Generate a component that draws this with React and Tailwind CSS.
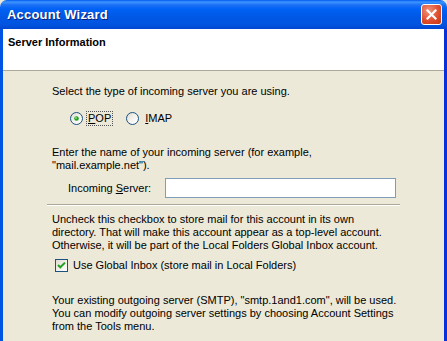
import React from "react";

function Radio({ checked }) {
  return (
    <svg width="13" height="13" viewBox="0 0 13 13" className="shrink-0">
      <defs>
        <linearGradient id={checked ? "rg1" : "rg2"} x1="0" y1="0" x2="1" y2="1">
          <stop offset="0" stopColor="#dcd9cf" />
          <stop offset="0.5" stopColor="#f4f3ee" />
          <stop offset="1" stopColor="#ffffff" />
        </linearGradient>
      </defs>
      <circle cx="6.5" cy="6.5" r="6" fill={`url(#${checked ? "rg1" : "rg2"})`} stroke="#1c5180" strokeWidth="1" />
      {checked && <circle cx="6.5" cy="6.5" r="2.3" fill="#21a121" />}
      {checked && <circle cx="6" cy="6" r="0.9" fill="#8ee08e" />}
    </svg>
  );
}

function Check() {
  return (
    <svg width="13" height="13" viewBox="0 0 13 13" className="shrink-0">
      <defs>
        <linearGradient id="cg" x1="0" y1="0" x2="1" y2="1">
          <stop offset="0" stopColor="#dcd9cf" />
          <stop offset="0.6" stopColor="#f4f3ee" />
          <stop offset="1" stopColor="#ffffff" />
        </linearGradient>
      </defs>
      <rect x="0.5" y="0.5" width="12" height="12" fill="url(#cg)" stroke="#1c5180" />
      <path d="M3 6 L5.3 8.3 L10 3.6" fill="none" stroke="#21a121" strokeWidth="2" />
    </svg>
  );
}

export default function App() {
  return (
    <div
      className="w-[447px] h-[341px] overflow-hidden flex flex-col bg-[#ece9d8] text-[11px] leading-[13px] text-black"
      style={{ fontFamily: '"Liberation Sans", Arial, sans-serif' }}
    >
      {/* Title bar */}
      <div className="h-[29px] shrink-0 flex items-center justify-between pl-[7px] pr-[5px] rounded-t-[7px] bg-[linear-gradient(to_bottom,#0058ee_0px,#3d95ff_2px,#1b70f5_5px,#0062f5_9px,#0058e6_16px,#0055e0_24px,#0047d1_29px)]">
        <span className="text-white font-bold text-[13px] [text-shadow:1px_1px_0_#0a1e78] tracking-[0.2px]">
          Account Wizard
        </span>
        <div className="w-[21px] h-[21px] rounded-[3px] border border-white bg-[radial-gradient(circle_at_35%_30%,#f0957c,#e04e2f_55%,#c13812)] flex items-center justify-center">
          <svg width="11" height="11" viewBox="0 0 11 11">
            <path d="M1.5 1.5 L9.5 9.5 M9.5 1.5 L1.5 9.5" stroke="white" strokeWidth="2.2" strokeLinecap="square" />
          </svg>
        </div>
      </div>
      {/* Body */}
      <div className="flex-1 flex border-l-[3px] border-r-[3px] border-l-[#0054e3] border-r-[#0831d9]">
        <div className="flex-1 flex flex-col">
          <div className="h-[42px] bg-white border-b border-[#aca899] pt-[7px] pl-[5px] font-bold">
            Server Information
          </div>
          <div className="flex-1 pl-[49px] pr-[41px] flex flex-col">
            <div className="mt-[14px]">Select the type of incoming server you are using.</div>
            <div className="mt-[14px] flex items-center h-[13px] pl-[18px]">
              <Radio checked />
              <span className="ml-[4px] px-[1px] outline outline-1 outline-dotted outline-[#555] leading-[13px]">
                <u>P</u>OP
              </span>
              <span className="ml-[14px]"></span>
              <Radio />
              <span className="ml-[6px]">
                <u>I</u>MAP
              </span>
            </div>
            <div className="mt-[21px]">
              Enter the name of your incoming server (for example,
              <br />
              "mail.example.net").
            </div>
            <div className="mt-[6px] flex items-center">
              <span className="w-[113px] pl-[16px]">
                Incoming <u>S</u>erver:
              </span>
              <input className="w-[231px] h-[20px] border border-[#7f9db9] bg-white outline-none" />
            </div>
            <div className="mt-[6px] -ml-[5px] w-[353px] h-[2px] border-t border-[#aca899] border-b border-b-white"></div>
            <div className="mt-[7px]">
              Uncheck this checkbox to store mail for this account in its own
              <br />
              directory. That will make this account appear as a top-level account.
              <br />
              Otherwise, it will be part of the Local Folders Global Inbox account.
            </div>
            <div className="mt-[7px] flex items-center h-[13px] pl-[3px]">
              <Check />
              <span className="ml-[5px]">Use Global Inbox (store mail in Local Folders)</span>
            </div>
            <div className="mt-[22px]">
              Your existing outgoing server (SMTP), "smtp.1and1.com", will be used.
              <br />
              You can modify outgoing server settings by choosing Account Settings
              <br />
              from the Tools menu.
            </div>
          </div>
        </div>
      </div>
    </div>
  );
}
